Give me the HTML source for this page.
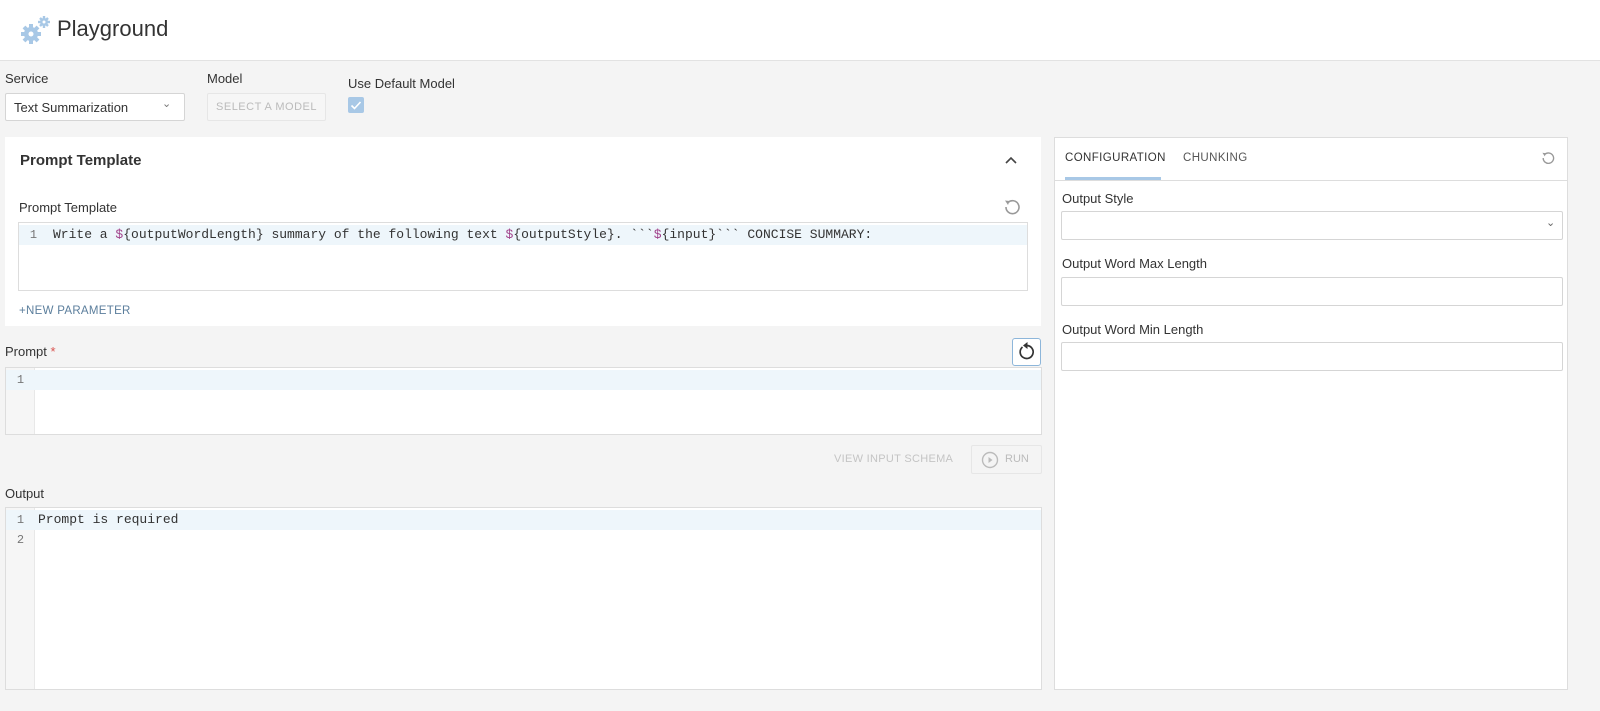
<!DOCTYPE html>
<html><head><meta charset="utf-8"><style>
*{box-sizing:border-box;margin:0;padding:0}
body{width:1600px;height:711px;background:#f4f4f4;font-family:"Liberation Sans",sans-serif;color:#333;position:relative;overflow:hidden}
.a{position:absolute}
.lbl{font-size:13px;color:#333}
.mono{font-family:"Liberation Mono",monospace;font-size:13px}
.ed{background:#fff;border:1px solid #ddd}
.gut{position:absolute;left:0;top:0;bottom:0;width:29px;background:#f6f6f6;border-right:1px solid #e8e8e8}
.ln{position:absolute;left:0;width:100%;height:20px;background:#eef6fb}
.num{position:absolute;width:29px;text-align:center;color:#777;font-size:12px;font-family:"Liberation Mono",monospace}
.inp{position:absolute;background:#fff;border:1px solid #d5d5d5;border-radius:2px}
</style></head><body>
<div class="a" style="left:0;top:0;width:1600px;height:61px;background:#fff;border-bottom:1px solid #e2e2e2"></div>
<svg class="a" style="left:19px;top:14px" width="34" height="32" viewBox="0 0 34 32">
<g fill="#a8c8e6"><circle cx="12" cy="20" r="7"/><g stroke="#a8c8e6" stroke-width="4"><line x1="12" y1="10" x2="12" y2="30"/><line x1="2" y1="20" x2="22" y2="20"/><line x1="5" y1="13" x2="19" y2="27"/><line x1="5" y1="27" x2="19" y2="13"/></g><circle cx="12" cy="20" r="2.5" fill="#fff"/>
<circle cx="25" cy="8" r="4"/><g stroke="#a8c8e6" stroke-width="2.4"><line x1="25" y1="2" x2="25" y2="14"/><line x1="19" y1="8" x2="31" y2="8"/><line x1="21" y1="4" x2="29" y2="12"/><line x1="21" y1="12" x2="29" y2="4"/></g><circle cx="25" cy="8" r="1.5" fill="#fff"/></g></svg>
<div class="a" style="left:57px;top:16px;font-size:22px;color:#333">Playground</div>

<div class="a lbl" style="left:5px;top:71px">Service</div>
<div class="inp" style="left:5px;top:93px;width:180px;height:28px"><span class="a" style="left:8px;top:6px;font-size:13px">Text Summarization</span><span class="a" style="left:156px;top:3px;font-size:11px;color:#777">&#8964;</span></div>
<div class="a lbl" style="left:207px;top:71px">Model</div>
<div class="a" style="left:207px;top:93px;width:119px;height:28px;border:1px solid #e6e6e6;background:#f6f6f6;border-radius:2px;font-size:11px;color:#bbb;text-align:center;line-height:27px;letter-spacing:.5px">SELECT A MODEL</div>
<div class="a lbl" style="left:348px;top:76px">Use Default Model</div>
<div class="a" style="left:348px;top:97px;width:16px;height:16px;background:#a8c8e6;border-radius:2px"><svg width="16" height="16"><path d="M3.5 8.5l3 3 6-6.5" stroke="#fff" stroke-width="1.6" fill="none"/></svg></div>

<div class="a" style="left:5px;top:137px;width:1036px;height:189px;background:#fff"></div>
<div class="a" style="left:20px;top:152px;font-size:15px;font-weight:bold;color:#333">Prompt Template</div>
<svg class="a" style="left:1004px;top:154px" width="14" height="12"><path d="M2 9l5-5 5 5" stroke="#444" stroke-width="1.6" fill="none"/></svg>
<div class="a lbl" style="left:19px;top:200px">Prompt Template</div>
<svg class="a" style="left:1002px;top:197px" width="20" height="20" viewBox="0 0 20 20"><path d="M6 5.5A6.5 6.5 0 1 1 4 10" stroke="#999" stroke-width="1.6" fill="none"/><path d="M3 3.5l4.5 0.5-1.5 4z" fill="#999"/></svg>
<div class="a ed" style="left:18px;top:222px;width:1010px;height:69px"><div class="ln" style="top:2px"></div><div class="num" style="top:5px">1</div>
<div class="a mono" style="left:34px;top:4px;color:#333;white-space:pre">Write a <span style="color:#a0408a">$</span>{outputWordLength} summary of the following text <span style="color:#a0408a">$</span>{outputStyle}. &#96;&#96;&#96;<span style="color:#a0408a">$</span>{input}&#96;&#96;&#96; CONCISE SUMMARY:</div></div>
<div class="a" style="left:19px;top:305px;font-size:11.5px;color:#5b7e9c;letter-spacing:.3px">+NEW PARAMETER</div>

<div class="a lbl" style="left:5px;top:344px">Prompt <span style="color:#d9534f">*</span></div>
<div class="a" style="left:1012px;top:338px;width:29px;height:28px;border:1px solid #8db6da;border-radius:3px;background:#fff"><svg width="27" height="26" viewBox="0 0 27 26"><path d="M9.5 8A6.5 6.5 0 1 0 14 6.5" stroke="#333" stroke-width="1.7" fill="none"/><path d="M14.5 3l0 7-4.5-3.5z" fill="#333"/></svg></div>
<div class="a ed" style="left:5px;top:367px;width:1037px;height:68px"><div class="gut"></div><div class="ln" style="top:2px"></div><div class="num" style="top:5px">1</div></div>

<div class="a" style="left:834px;top:453px;font-size:11px;color:#c4c4c4;letter-spacing:.3px">VIEW INPUT SCHEMA</div>
<div class="a" style="left:971px;top:445px;width:71px;height:29px;border:1px solid #e6e6e6;border-radius:2px"><svg class="a" style="left:9px;top:5px" width="18" height="18"><circle cx="9" cy="9" r="7.5" stroke="#bbb" stroke-width="1.4" fill="none"/><path d="M7.5 6v6l4-3z" fill="#bbb"/></svg><span class="a" style="left:33px;top:7px;font-size:11px;color:#bbb">RUN</span></div>

<div class="a lbl" style="left:5px;top:486px">Output</div>
<div class="a ed" style="left:5px;top:507px;width:1037px;height:183px"><div class="gut"></div><div class="ln" style="top:2px"></div><div class="num" style="top:5px">1</div><div class="num" style="top:25px">2</div>
<div class="a mono" style="left:32px;top:4px">Prompt is required</div></div>

<div class="a" style="left:1054px;top:137px;width:514px;height:553px;background:#fff;border:1px solid #ddd"></div>
<div class="a" style="left:1054px;top:180px;width:514px;height:1px;background:#ddd"></div>
<div class="a" style="left:1065px;top:152px;font-size:11.5px;color:#333;letter-spacing:.4px">CONFIGURATION</div>
<div class="a" style="left:1065px;top:177px;width:96px;height:3px;background:#a8c8e6"></div>
<div class="a" style="left:1183px;top:152px;font-size:11.5px;color:#555;letter-spacing:.4px">CHUNKING</div>
<svg class="a" style="left:1540px;top:150px" width="16" height="16" viewBox="0 0 20 20"><path d="M6 5.5A6.5 6.5 0 1 1 4 10" stroke="#999" stroke-width="1.7" fill="none"/><path d="M3 3.5l4.5 0.5-1.5 4z" fill="#999"/></svg>
<div class="a lbl" style="left:1062px;top:191px">Output Style</div>
<div class="inp" style="left:1061px;top:211px;width:502px;height:29px"><span class="a" style="left:484px;top:4px;font-size:11px;color:#666">&#8964;</span></div>
<div class="a lbl" style="left:1062px;top:256px">Output Word Max Length</div>
<div class="inp" style="left:1061px;top:277px;width:502px;height:29px"></div>
<div class="a lbl" style="left:1062px;top:322px">Output Word Min Length</div>
<div class="inp" style="left:1061px;top:342px;width:502px;height:29px"></div>
</body></html>
